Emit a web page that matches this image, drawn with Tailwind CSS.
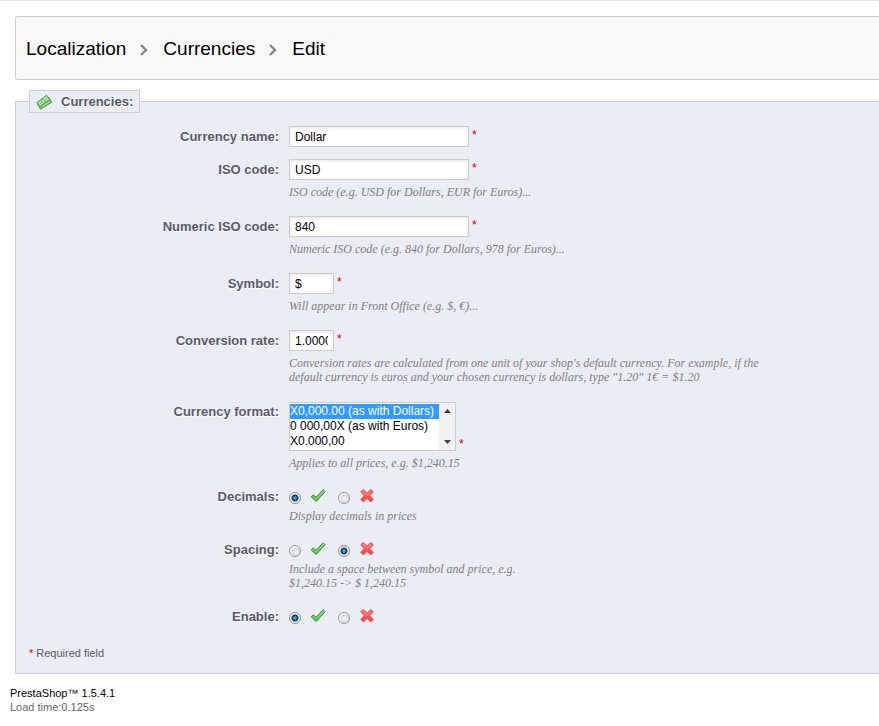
<!DOCTYPE html>
<html lang="en">
<head>
<meta charset="utf-8">
<meta name="viewport" content="width=device-width, initial-scale=1">
<title>Localization &gt; Currencies &gt; Edit</title>
<script src="https://cdn.jsdelivr.net/npm/@tailwindcss/browser@4"></script>
</head>
<body class="bg-white border-t border-[#e3e3e3] font-['Liberation_Sans',Arial,sans-serif] text-xs text-[#585a69]">
<svg class="absolute h-0 w-0" aria-hidden="true">
  <defs>
    <linearGradient id="greenFill" x1="0" y1="0" x2="0" y2="1"><stop offset="0" stop-color="#8fd487"/><stop offset="1" stop-color="#4dad45"/></linearGradient>
    <linearGradient id="redFill" x1="0" y1="0" x2="0" y2="1"><stop offset="0" stop-color="#ff7878"/><stop offset="1" stop-color="#fb3f3f"/></linearGradient>
    <symbol id="tick" viewBox="0 0 16 16"><path d="M1.2 9 L3.2 6.8 L6 9.2 L13.2 1.7 L15.2 3.7 L6.3 13.4 Z" fill="url(#greenFill)" stroke="#3f9a3c" stroke-linejoin="round"/><path d="M3 8.6 L6.1 11 L13.4 3.3" fill="none" stroke="#8ed186" stroke-width="1"/></symbol>
    <symbol id="cross" viewBox="0 0 16 16"><path d="M4.2 1.6 L8 5.2 L11.8 1.6 L14.2 3.8 L10.6 7.7 L14.2 11.4 L11.8 13.8 L8 10.3 L4.2 13.8 L1.8 11.4 L5.4 7.7 L1.8 3.8 Z" fill="url(#redFill)" stroke="#f0444a" stroke-linejoin="round"/><path d="M4 3.4 L8 7.1 L12 3.4" fill="none" stroke="#ff9696" stroke-width="1"/></symbol>
    <symbol id="chevron" viewBox="0 0 8 12"><path d="M1 1 L6 6 L1 11" fill="none" stroke="#868686" stroke-width="2.4"/></symbol>
  </defs>
</svg>

<nav aria-label="Breadcrumb" class="mt-[15px] ml-[15px] flex h-16 items-center rounded-l-[3px] border border-r-0 border-[#ccc] bg-[#f8f8f8] pt-[2px] pl-[10px] text-[19px] text-black">
  <a href="#">Localization</a>
  <svg class="ml-[14px] mr-[15px] mt-px h-3 w-2" aria-hidden="true"><use href="#chevron"/></svg>
  <a href="#">Currencies</a>
  <svg class="ml-[14px] mr-[15px] mt-px h-3 w-2" aria-hidden="true"><use href="#chevron"/></svg>
  <span>Edit</span>
</nav>

<form class="mt-[10px] ml-[15px]">
<fieldset class="border border-r-0 border-[#ccced7] bg-[#ebedf4] px-[13px] pb-[13px]">
  <legend class="flex h-[23px] items-center gap-2 border border-[#ccced7] bg-[#ebedf4] px-[6px] text-[13px] font-bold text-shadow-[0_1px_0_#fff]">
    <svg class="h-4 w-4 mr-[1px]" viewBox="0 0 16 16" aria-hidden="true">
      <path d="M4.5 15.2 L1.5 10 L13 3.5 L15.6 8.3 Z" fill="#7cc275" stroke="#4c9a4a" stroke-linejoin="round"/>
      <path d="M3.8 12.6 L.7 8.6 L10.6 1.2 L13.6 5.4 Z" fill="#9ad391" stroke="#56a552" stroke-linejoin="round"/>
      <path d="M4.2 11 L2.5 8.9 L10.2 3.1 L11.8 5.3 Z" fill="none" stroke="#c5e9bd" stroke-width=".8"/>
      <circle cx="7.2" cy="7" r="1.6" fill="#d8f2d2" stroke="#62ab5c" stroke-width=".7"/>
      <path d="M6.5 12.7 L13.8 7.6" fill="none" stroke="#b9e2b1" stroke-width=".8"/>
    </svg>
    Currencies:
  </legend>

  <div class="grid grid-cols-[250px_minmax(0,1fr)] gap-x-[10px] gap-y-3 pt-[13px]">
    <label for="name" class="pt-px text-right text-[13px] leading-5 font-bold text-shadow-[0_1px_0_#fff]">Currency name:</label>
    <div class="flex gap-[3px]">
      <input id="name" type="text" value="Dollar" class="h-[21px] w-[180px] border border-[#ccc] bg-white px-[5px] text-xs text-black shadow-[inset_0_1px_3px_#e4e4e4]"><sup class="top-0 pt-[3px] text-xs leading-3 text-[#c00]">*</sup>
    </div>

    <label for="iso" class="pt-px text-right text-[13px] leading-5 font-bold text-shadow-[0_1px_0_#fff]">ISO code:</label>
    <div class="pb-[5px]">
      <div class="flex gap-[3px]">
        <input id="iso" type="text" value="USD" class="h-[21px] w-[180px] border border-[#ccc] bg-white px-[5px] text-xs text-black shadow-[inset_0_1px_3px_#e4e4e4]"><sup class="top-0 pt-[3px] text-xs leading-3 text-[#c00]">*</sup>
      </div>
      <p class="mt-[5px] max-w-[500px] font-['Liberation_Serif',serif] text-xs leading-[14px] text-[#7f7f7f] italic">ISO code (e.g. USD for Dollars, EUR for Euros)...</p>
    </div>

    <label for="num" class="pt-px text-right text-[13px] leading-5 font-bold text-shadow-[0_1px_0_#fff]">Numeric ISO code:</label>
    <div class="pb-[5px]">
      <div class="flex gap-[3px]">
        <input id="num" type="text" value="840" class="h-[21px] w-[180px] border border-[#ccc] bg-white px-[5px] text-xs text-black shadow-[inset_0_1px_3px_#e4e4e4]"><sup class="top-0 pt-[3px] text-xs leading-3 text-[#c00]">*</sup>
      </div>
      <p class="mt-[5px] max-w-[500px] font-['Liberation_Serif',serif] text-xs leading-[14px] text-[#7f7f7f] italic">Numeric ISO code (e.g. 840 for Dollars, 978 for Euros)...</p>
    </div>

    <label for="symbol" class="pt-px text-right text-[13px] leading-5 font-bold text-shadow-[0_1px_0_#fff]">Symbol:</label>
    <div class="pb-[5px]">
      <div class="flex gap-[3px]">
        <input id="symbol" type="text" value="$" class="h-[21px] w-[45px] border border-[#ccc] bg-white px-[5px] text-xs text-black shadow-[inset_0_1px_3px_#e4e4e4]"><sup class="top-0 pt-[3px] text-xs leading-3 text-[#c00]">*</sup>
      </div>
      <p class="mt-[5px] max-w-[500px] font-['Liberation_Serif',serif] text-xs leading-[14px] text-[#7f7f7f] italic">Will appear in Front Office (e.g. $, €)...</p>
    </div>

    <label for="rate" class="pt-px text-right text-[13px] leading-5 font-bold text-shadow-[0_1px_0_#fff]">Conversion rate:</label>
    <div class="pb-[6px]">
      <div class="flex gap-[3px]">
        <input id="rate" type="text" value="1.000000" class="h-[21px] w-[45px] border border-[#ccc] bg-white px-[5px] text-xs text-black shadow-[inset_0_1px_3px_#e4e4e4]"><sup class="top-0 pt-[3px] text-xs leading-3 text-[#c00]">*</sup>
      </div>
      <p class="mt-[5px] max-w-[500px] font-['Liberation_Serif',serif] text-xs leading-[14px] text-[#7f7f7f] italic">Conversion rates are calculated from one unit of your shop's default currency. For example, if the<br>default currency is euros and your chosen currency is dollars, type "1.20" 1€ = $1.20</p>
    </div>

    <label for="format" class="text-right text-[13px] leading-5 font-bold text-shadow-[0_1px_0_#fff]">Currency format:</label>
    <div class="pb-[5px]">
      <div class="flex items-end gap-[3px]">
        <div class="flex h-[49px] w-[167px] border border-[#ccc] bg-white">
          <select id="format" size="3" class="h-[47px] w-[149px] overflow-y-hidden bg-white pt-px text-xs text-black [scrollbar-width:none]">
            <option selected class="h-[15px] min-h-0 bg-[#39f] bg-linear-to-r from-[#39f] to-[#39f] p-0 leading-[15px] text-white">X0,000.00 (as with Dollars)</option>
            <option class="h-[15px] min-h-0 p-0 leading-[15px]">0 000,00X (as with Euros)</option>
            <option class="h-[15px] min-h-0 p-0 leading-[15px]">X0.000,00</option>
          </select>
          <div class="flex flex-1 flex-col items-center justify-between bg-[#f1f1f1] py-[6px]" aria-hidden="true">
            <svg class="h-1 w-[7px]" viewBox="0 0 7 4"><path d="M0 4 L3.5 0 L7 4 Z" fill="#404040"/></svg>
            <svg class="h-1 w-[7px]" viewBox="0 0 7 4"><path d="M0 0 L3.5 4 L7 0 Z" fill="#404040"/></svg>
          </div>
        </div>
        <sup class="top-0 pb-px text-xs leading-3 text-[#c00]">*</sup>
      </div>
      <p class="mt-[5px] max-w-[500px] font-['Liberation_Serif',serif] text-xs leading-[14px] text-[#7f7f7f] italic">Applies to all prices, e.g. $1,240.15</p>
    </div>

    <span id="decimals" class="text-right text-[13px] leading-5 font-bold text-shadow-[0_1px_0_#fff]">Decimals:</span>
    <div class="pb-[5px]">
      <div role="radiogroup" aria-labelledby="decimals" class="flex h-[21px] items-center">
        <input id="dec1" name="dec" type="radio" checked class="h-3 w-3 appearance-none rounded-full border border-[#8b8d91] bg-[radial-gradient(circle_at_50%_50%,#5cc8f2_0,#1c5f90_2px,#0f3354_3px,#f4f4f4_4px)]">
        <label for="dec1" aria-label="Yes" class="ml-[9px]"><svg class="mb-1 h-4 w-4" aria-hidden="true"><use href="#tick"/></svg></label>
        <input id="dec0" name="dec" type="radio" class="ml-3 h-3 w-3 appearance-none rounded-full border border-[#96989b] bg-[radial-gradient(circle_at_60%_60%,#fafafa_0,#d8d8d8_4px,#f8f8f8_5px)]">
        <label for="dec0" aria-label="No" class="ml-[9px]"><svg class="mb-1 h-4 w-4" aria-hidden="true"><use href="#cross"/></svg></label>
      </div>
      <p class="mt-px max-w-[500px] font-['Liberation_Serif',serif] text-xs leading-[14px] text-[#7f7f7f] italic">Display decimals in prices</p>
    </div>

    <span id="spacing" class="text-right text-[13px] leading-5 font-bold text-shadow-[0_1px_0_#fff]">Spacing:</span>
    <div class="pb-[5px]">
      <div role="radiogroup" aria-labelledby="spacing" class="flex h-[21px] items-center">
        <input id="spa1" name="spa" type="radio" class="h-3 w-3 appearance-none rounded-full border border-[#96989b] bg-[radial-gradient(circle_at_60%_60%,#fafafa_0,#d8d8d8_4px,#f8f8f8_5px)]">
        <label for="spa1" aria-label="Yes" class="ml-[9px]"><svg class="mb-1 h-4 w-4" aria-hidden="true"><use href="#tick"/></svg></label>
        <input id="spa0" name="spa" type="radio" checked class="ml-3 h-3 w-3 appearance-none rounded-full border border-[#8b8d91] bg-[radial-gradient(circle_at_50%_50%,#5cc8f2_0,#1c5f90_2px,#0f3354_3px,#f4f4f4_4px)]">
        <label for="spa0" aria-label="No" class="ml-[9px]"><svg class="mb-1 h-4 w-4" aria-hidden="true"><use href="#cross"/></svg></label>
      </div>
      <p class="mt-px max-w-[500px] font-['Liberation_Serif',serif] text-xs leading-[14px] text-[#7f7f7f] italic">Include a space between symbol and price, e.g.<br>$1,240.15 -&gt; $ 1,240.15</p>
    </div>

    <span id="enable" class="text-right text-[13px] leading-5 font-bold text-shadow-[0_1px_0_#fff]">Enable:</span>
    <div role="radiogroup" aria-labelledby="enable" class="flex h-[21px] items-center">
      <input id="ena1" name="ena" type="radio" checked class="h-3 w-3 appearance-none rounded-full border border-[#8b8d91] bg-[radial-gradient(circle_at_50%_50%,#5cc8f2_0,#1c5f90_2px,#0f3354_3px,#f4f4f4_4px)]">
      <label for="ena1" aria-label="Yes" class="ml-[9px]"><svg class="mb-1 h-4 w-4" aria-hidden="true"><use href="#tick"/></svg></label>
      <input id="ena0" name="ena" type="radio" class="ml-3 h-3 w-3 appearance-none rounded-full border border-[#96989b] bg-[radial-gradient(circle_at_60%_60%,#fafafa_0,#d8d8d8_4px,#f8f8f8_5px)]">
      <label for="ena0" aria-label="No" class="ml-[9px]"><svg class="mb-1 h-4 w-4" aria-hidden="true"><use href="#cross"/></svg></label>
    </div>
  </div>

  <p class="mt-[18px] flex gap-[3px] text-[11px] leading-[14px]"><span class="text-[#c00]">*</span>Required field</p>
</fieldset>
</form>

<footer class="mt-3 ml-[10px] text-[11px] leading-[14px]">
  <p class="text-black">PrestaShop™ 1.5.4.1</p>
  <p class="text-[#666]">Load time:0.125s</p>
</footer>
</body>
</html>
